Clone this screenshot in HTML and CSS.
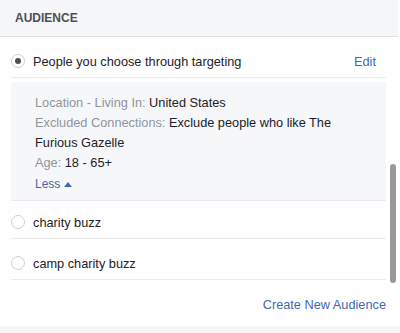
FILE: index.html
```html
<!DOCTYPE html>
<html lang="en">
  <head>
    <meta charset="UTF-8" />
    <meta name="viewport" content="width=device-width, initial-scale=1.0" />
    <title>Audience</title>
    <link rel="stylesheet" href="styles.css">
  </head>
  <body>
    <div class="panel">
      <div class="panel-header">AUDIENCE</div>

      <div class="panel-body">
        <div class="audience-list">
          <div class="row selected">
            <span class="radio checked"></span>
            <span class="row-name">People you choose through targeting</span>
            <a class="edit" href="#">Edit</a>
          </div>

          <div class="details">
            <p><span class="label">Location - Living In:</span> United States</p>
            <p><span class="label">Excluded Connections:</span> Exclude people who like The Furious Gazelle</p>
            <p><span class="label">Age:</span> 18 - 65+</p>
            <a class="less" href="#">Less <span class="arrow-up"></span></a>
          </div>

          <div class="row first-plain">
            <span class="radio"></span>
            <span class="row-name">charity buzz</span>
          </div>

          <div class="row">
            <span class="radio"></span>
            <span class="row-name">camp charity buzz</span>
          </div>

          <div class="create">
            <a href="#">Create New Audience</a>
          </div>
        </div>

        <div class="scroll-track">
          <div class="scroll-thumb"></div>
        </div>
      </div>
    </div>
    <div class="page-bottom"></div>
  </body>
</html>
```

FILE: styles.css
```css
body {
  margin: 0;
  padding: 0;
  background-color: #ffffff;
  font-family: "Liberation Sans", Arial, Helvetica, sans-serif;
  font-size: 12.75px;
  color: #1d2129;
}

a {
  color: #4267b2;
  text-decoration: none;
}

.panel {
  width: 398px;
}

.panel-header {
  height: 36px;
  display: flex;
  align-items: center;
  padding: 0 15px;
  background-color: #f5f6f7;
  border-bottom: 1px solid #dddfe2;
  font-size: 12px;
  font-weight: bold;
  color: #4b4f56;
}

.panel-body {
  display: flex;
  height: 289px;
}

.audience-list {
  width: 375px;
  padding: 8px 0 0 11px;
}

.row {
  display: flex;
  align-items: center;
  height: 24px;
  padding: 12px 10px 4px 0;
  border-bottom: 1px solid #e9ebee;
}

.row.selected {
  padding-top: 4px;
  padding-bottom: 4px;
}

.row.first-plain {
  padding-top: 9px;
}

.radio {
  width: 12px;
  height: 12px;
  border: 1px solid #ccd0d5;
  border-radius: 50%;
  margin-right: 8px;
  display: flex;
  align-items: center;
  justify-content: center;
  flex-shrink: 0;
}

.radio.checked::after {
  content: "";
  width: 6px;
  height: 6px;
  border-radius: 50%;
  background-color: #4b4f56;
}

.row-name {
  flex: 1;
}

.details {
  margin-top: 4px;
  padding: 11px 24px 7px;
  background-color: #f6f7f9;
  border-bottom: 1px solid #e9ebee;
}

.details p {
  margin: 0;
  line-height: 20px;
}

.label {
  color: #90949c;
}

.less {
  display: flex;
  align-items: center;
  gap: 4px;
  height: 18px;
  font-size: 12px;
  padding-top: 2px;
}

.arrow-up {
  width: 0;
  height: 0;
  border-left: 4px solid transparent;
  border-right: 4px solid transparent;
  border-bottom: 5px solid #4267b2;
}

.create {
  text-align: right;
  padding-top: 17px;
  line-height: 16px;
}

.scroll-track {
  width: 12px;
  padding: 127px 2px 0 4px;
  box-sizing: border-box;
}

.scroll-thumb {
  width: 6px;
  height: 119px;
  border-radius: 3px;
  background-color: #999999;
}

.page-bottom {
  height: 7px;
  background-color: #f5f6f7;
}
```
